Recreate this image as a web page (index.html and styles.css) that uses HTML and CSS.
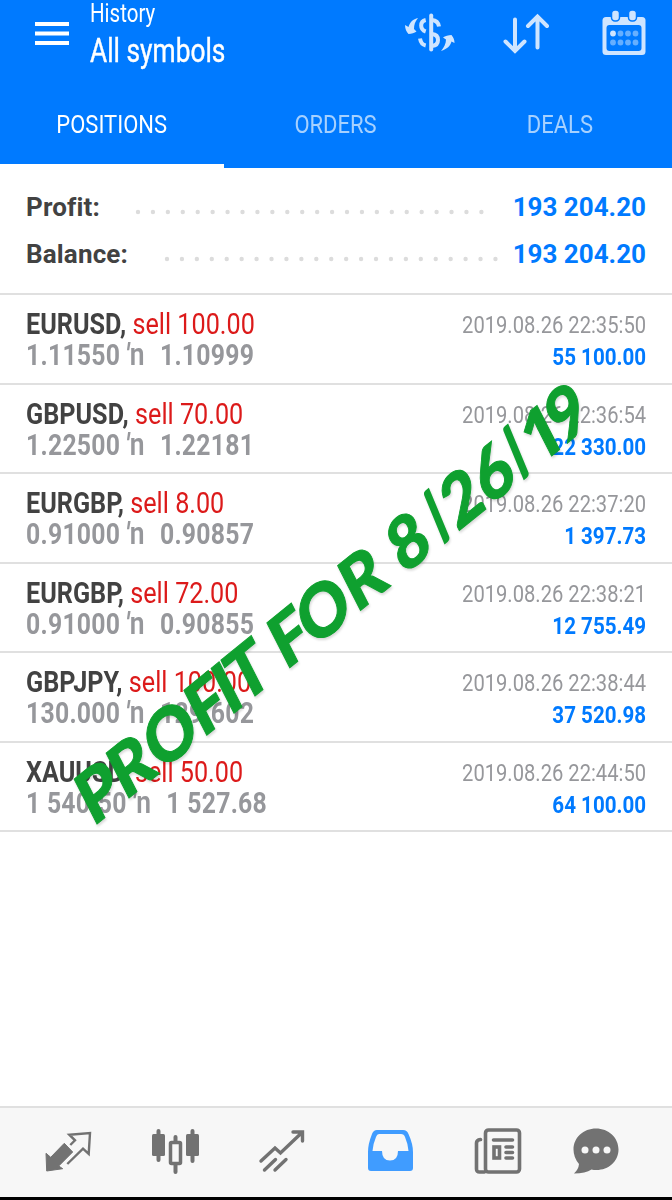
FILE: index.html
```
<!DOCTYPE html>
<html lang="en">
<head>
    <meta charset="UTF-8">
    <meta name="viewport" content="width=device-width, initial-scale=1.0">
    <title>History</title>
    <link rel="stylesheet" href="styles.css">
</head>
<body>
    <div class="app">
        <header class="header">
            <div class="toolbar">
                <button class="icon-button menu-button" aria-label="Menu">
                    <svg width="34" height="23" viewBox="0 0 34 23"><path d="M0 2h34M0 11.5h34M0 21h34" stroke="#fff" stroke-width="3.8"/></svg>
                </button>
                <div class="heading">
                    <div class="subtitle"><span>History</span></div>
                    <div class="title"><span>All symbols</span></div>
                </div>
                <div class="actions">
                    <svg class="action-symbol" width="50" height="40" viewBox="0 0 50 40">
                        <g fill="none" stroke="#cfe5ff" stroke-width="4">
                            <path d="M26.200 3.500v34" stroke-linecap="round"/>
                            <path d="M20.700 8q-4.500 1-4.500 5.500t4.500 6M15 26.500q1 6 5.700 7"/>
                            <path d="M27 8q6 .5 7 6.500M27 22q6 .5 6 6t-6 6"/>
                        </g>
                        <path d="M13 6C8 7 5 10 3.500 15L0 13c0 4 1.500 7 3.500 9 3 0 6-1 8-2.500L9 17c0-4 1-7.500 4-11zM36 39c6-2 9.500-5 10.500-9.500l3 1.500c0-3-1-5.500-3-8-3 0-6.500 1-8.500 2.500l3 2c0 4-2 8-5 11.500z" fill="#cfe5ff"/>
                    </svg>
                    <svg class="action-sort" width="47" height="42" viewBox="0 0 47 42" fill="none" stroke="#cfe5ff" stroke-width="4" stroke-linecap="round">
                        <path d="M12 7.500v31M2.500 29.500l9.500 9.500 9.500-9.500M34.500 35.500V5M25 14l9.500-9.500L44 14"/>
                    </svg>
                    <svg class="action-calendar" width="44" height="46" viewBox="0 0 44 46">
                        <rect x="0.500" y="8" width="43" height="38" rx="3.500" fill="#cfe5ff"/>
                        <rect x="4.500" y="16" width="35" height="26" rx="3" fill="#007aff"/>
                        <rect x="9.500" y="1" width="8" height="11" rx="3.500" fill="#cfe5ff" stroke="#007aff" stroke-width="1.500"/>
                        <rect x="26.500" y="1" width="8" height="11" rx="3.500" fill="#cfe5ff" stroke="#007aff" stroke-width="1.500"/>
                        <circle cx="11" cy="24.500" r="2.900" fill="#cfe5ff"/>
                        <g fill="#66afff">
                            <circle cx="18.500" cy="24.500" r="2.900"/><circle cx="26" cy="24.500" r="2.900"/><circle cx="33.500" cy="24.500" r="2.900"/>
                            <circle cx="11" cy="33.500" r="2.900"/><circle cx="18.500" cy="33.500" r="2.900"/><circle cx="26" cy="33.500" r="2.900"/><circle cx="33.500" cy="33.500" r="2.900"/>
                        </g>
                    </svg>
                </div>
            </div>
            <nav class="tabs">
                <div class="tab active"><span>POSITIONS</span></div>
                <div class="tab"><span>ORDERS</span></div>
                <div class="tab"><span>DEALS</span></div>
            </nav>
        </header>

        <section class="summary">
            <div class="summary-row">
                <span class="summary-label">Profit:</span>
                <svg class="dots dots-profit" width="352" height="6"><path d="M3 3h347" /></svg>
                <span class="summary-value">193 204.20</span>
            </div>
            <div class="summary-row">
                <span class="summary-label">Balance:</span>
                <svg class="dots dots-balance" width="336" height="6"><path d="M3 3h331" /></svg>
                <span class="summary-value">193 204.20</span>
            </div>
        </section>

        <main class="positions" id="positions"></main>

        <svg class="watermark" width="672" height="500" viewBox="0 360 672 500">
            <g transform="translate(97 824) rotate(-39)">
                <text transform="skewX(-12)" x="-5 36 81 136 171 188 243 278 334 395 464 504">PROFITFOR826</text>
                <text transform="skewX(-12)" class="one" x="567">1</text>
                <text transform="skewX(-12)" x="599">9</text>
                <text transform="skewX(5)" class="slash" x="444 546" y="-2">//</text>
            </g>
        </svg>

        <footer class="bottom-nav">
            <svg width="48" height="48" viewBox="0 0 48 48">
                <path d="M1 23.300l4.700 4L19.300 13.300l8.400 8.700-14 14 4 2.700L1.700 41z" fill="#727272" stroke="#727272" stroke-linejoin="round"/>
                <path d="M25.300 15l4.700-4.700-5.700-5.600L45 3l-1.300 21-5.700-5.300L22.300 34" fill="none" stroke="#727272" stroke-width="2.400"/>
            </svg>
            <svg width="48" height="48" viewBox="1 1 48 48">
                <path d="M6.500 2v29M40.500 2v30M23.500 8v35" fill="none" stroke="#727272" stroke-width="4" stroke-linecap="round"/>
                <rect x="0" y="5" width="13" height="22" rx="1.500" fill="#727272"/>
                <rect x="34" y="5" width="13" height="22" rx="1.500" fill="#727272"/>
                <rect x="18.500" y="13.500" width="10" height="21" rx="1" fill="#f7f7f7" stroke="#727272" stroke-width="3.500"/>
            </svg>
            <svg width="48" height="48" viewBox="2 1 48 48">
                <path d="M3 32l14-13 5.500 5L44 3.500M35 3h9.500v9M6.500 41l11-10.500M17 41l11-10.500" fill="none" stroke="#727272" stroke-width="3.400" stroke-linecap="round"/>
            </svg>
            <svg width="48" height="48" viewBox="1 1 48 48">
                <path d="M10 1h26q4 0 5.500 4Q46 15 46 23v16q0 3-3 3H4q-3 0-3-3V23Q1 15 5 5q1.500-4 5-4z" fill="#409cff"/>
                <path d="M12 5h22q3 0 4 3 3 7 3.500 14H31q0 9.500-8 9.500t-8-9.500H5.500Q6 15 9 8q1-3 3-3z" fill="#f7f7f7"/>
            </svg>
            <svg width="48" height="48" viewBox="0.500 1 48 48">
                <g fill="none" stroke="#727272" stroke-width="3.600" stroke-linecap="round">
                    <rect x="11" y="1" width="34" height="42" rx="3"/>
                    <path d="M10 43H5q-3 0-3-3V14q0-3 4-3.500M19 11h19M31.500 18H38M31.500 23.500H38M31.500 29H38"/>
                    <rect x="19.500" y="18" width="5.500" height="11"/>
                </g>
            </svg>
            <svg width="48" height="48" viewBox="0.500 0.500 48 48">
                <path d="M23.500-1C36-1 46 8 46 20S36 40.500 24 40.500q-3 0-5-.5Q13 44 1.500 44 6 40 6.500 34.500 1 28 1 20C1 8 11-1 23.500-1z" fill="#727272"/>
                <circle cx="12.500" cy="20.500" r="3.500" fill="#f7f7f7"/><circle cx="23.500" cy="20.500" r="3.500" fill="#f7f7f7"/><circle cx="34.500" cy="20.500" r="3.500" fill="#f7f7f7"/>
            </svg>
        </footer>
    </div>

    <script>
        const positions = [
            { symbol: "EURUSD", volume: "100.00", open: "1.11550", close: "1.10999", time: "2019.08.26 22:35:50", profit: "55 100.00" },
            { symbol: "GBPUSD", volume: "70.00", open: "1.22500", close: "1.22181", time: "2019.08.26 22:36:54", profit: "22 330.00" },
            { symbol: "EURGBP", volume: "8.00", open: "0.91000", close: "0.90857", time: "2019.08.26 22:37:20", profit: "1 397.73" },
            { symbol: "EURGBP", volume: "72.00", open: "0.91000", close: "0.90855", time: "2019.08.26 22:38:21", profit: "12 755.49" },
            { symbol: "GBPJPY", volume: "100.00", open: "130.000", close: "129.602", time: "2019.08.26 22:38:44", profit: "37 520.98" },
            { symbol: "XAUUSD", volume: "50.00", open: "1 540.50", close: "1 527.68", time: "2019.08.26 22:44:50", profit: "64 100.00" }
        ];

        const container = document.getElementById('positions');

        positions.forEach(item => {
            const row = document.createElement('div');
            row.className = 'position';
            row.innerHTML = `
                <div class="position-left">
                    <div class="deal"><b>${item.symbol},</b> <span class="sell">sell ${item.volume}</span></div>
                    <div class="prices">${item.open}<span class="arrow"><i>′</i>n</span>${item.close}</div>
                </div>
                <div class="position-right">
                    <div class="time">${item.time}</div>
                    <div class="profit">${item.profit}</div>
                </div>
            `;
            container.appendChild(row);
        });
    </script>
</body>
</html>
```
FILE: styles.css
```
* {
    box-sizing: border-box;
}

body {
    font-family: Roboto, sans-serif;
    margin: 0;
    background: #fff;
    color: #424242;
}

svg {
    display: block;
    overflow: visible;
}

.app {
    position: relative;
    display: flex;
    flex-direction: column;
    height: 1200px;
    overflow: hidden;
    border-bottom: 3px solid #000;
}

.header {
    height: 168px;
    background: #007aff;
    color: #fff;
}

.toolbar {
    display: flex;
    height: 80px;
    padding-left: 35px;
}

.icon-button {
    padding: 0;
    border: none;
    background: none;
}

.menu-button {
    align-self: flex-start;
    margin-top: 22px;
}

.heading {
    width: 200px;
    margin-left: 21px;
    white-space: nowrap;
}

.heading span,
.tab span {
    display: inline-block;
}

.subtitle {
    height: 28px;
    font-size: 25px;
    line-height: 28px;
}

.subtitle span {
    transform: scaleX(0.82);
    transform-origin: left;
}

.title {
    font-size: 32.5px;
    line-height: 46px;
}

.title span {
    transform: scaleX(0.81);
    transform-origin: left;
    -webkit-text-stroke: 0.4px #fff;
}

.actions {
    display: flex;
    margin-left: 115px;
}

.action-symbol {
    margin-top: 12px;
}

.action-sort {
    margin: 12px 0 0 48px;
}

.action-calendar {
    margin: 9px 0 0 52px;
}

.tabs {
    display: grid;
    grid-template-columns: repeat(3, 1fr);
    height: 88px;
}

.tab {
    height: 88px;
    font-size: 26.5px;
    line-height: 88px;
    text-align: center;
    color: #a6d1ff;
}

.tab span {
    transform: scaleX(0.83);
}

.tab.active {
    color: #fff;
    border-bottom: 4px solid #fff;
}

.summary {
    height: 125px;
    padding: 15px 26px 0;
}

.summary-row {
    display: flex;
    align-items: center;
    height: 47px;
    font-size: 26px;
    font-weight: bold;
}

.summary-label {
    flex: 1;
    letter-spacing: 0.15px;
}

.dots {
    margin-top: 11px;
}

.dots path {
    fill: none;
    stroke: #dcdcdc;
    stroke-width: 4.4;
    stroke-linecap: round;
    stroke-dasharray: 0 14.93;
}

.dots-profit {
    margin-right: 26px;
}

.dots-balance {
    margin-right: 13px;
}

.summary-value {
    color: #007aff;
}

.positions {
    flex: 1;
}

.position {
    display: flex;
    justify-content: space-between;
    height: 89.5px;
    padding: 12px 26px 0;
    border-top: 2px solid #e0e0e0;
    white-space: nowrap;
}

.position:last-child {
    height: 91px;
    border-bottom: 2px solid #e0e0e0;
}

.position-left {
    transform: scaleX(0.84);
    transform-origin: left;
}

.deal {
    height: 32px;
    font-size: 30px;
    line-height: 33px;
}

.sell {
    color: #dc1a1a;
}

.prices {
    font-size: 29.5px;
    font-weight: bold;
    line-height: 32px;
    letter-spacing: 0.3px;
    color: #96979b;
}

.arrow {
    margin: 0 18px 0 6px;
    font-size: 31.5px;
    font-weight: 600;
    line-height: 1;
}

.position-right {
    text-align: right;
    transform: scaleX(0.84);
    transform-origin: right;
}

.time {
    height: 33px;
    font-size: 24px;
    line-height: 37px;
    color: #96979b;
}

.profit {
    font-size: 24.5px;
    font-weight: bold;
    line-height: 34px;
    color: #007aff;
}

.watermark {
    position: absolute;
    top: 360px;
    left: 0;
    filter: drop-shadow(1px 2px 1px rgba(0, 0, 0, 0.15));
}

.watermark text {
    font-family: Lato, sans-serif;
    font-size: 68px;
    font-weight: 900;
    fill: #0fa02f;
    stroke: #0fa02f;
    stroke-width: 1;
}

.watermark .one {
    font-family: "Open Sans", sans-serif;
    font-weight: bold;
}

.watermark .slash {
    stroke-width: 0;
}

.bottom-nav {
    display: flex;
    gap: 59.6px;
    height: 91px;
    padding: 22px 0 0 45px;
    background: #f7f7f7;
    border-top: 2px solid #e0e0e0;
}

.bottom-nav svg:last-child {
    margin-left: -10px;
}
```
